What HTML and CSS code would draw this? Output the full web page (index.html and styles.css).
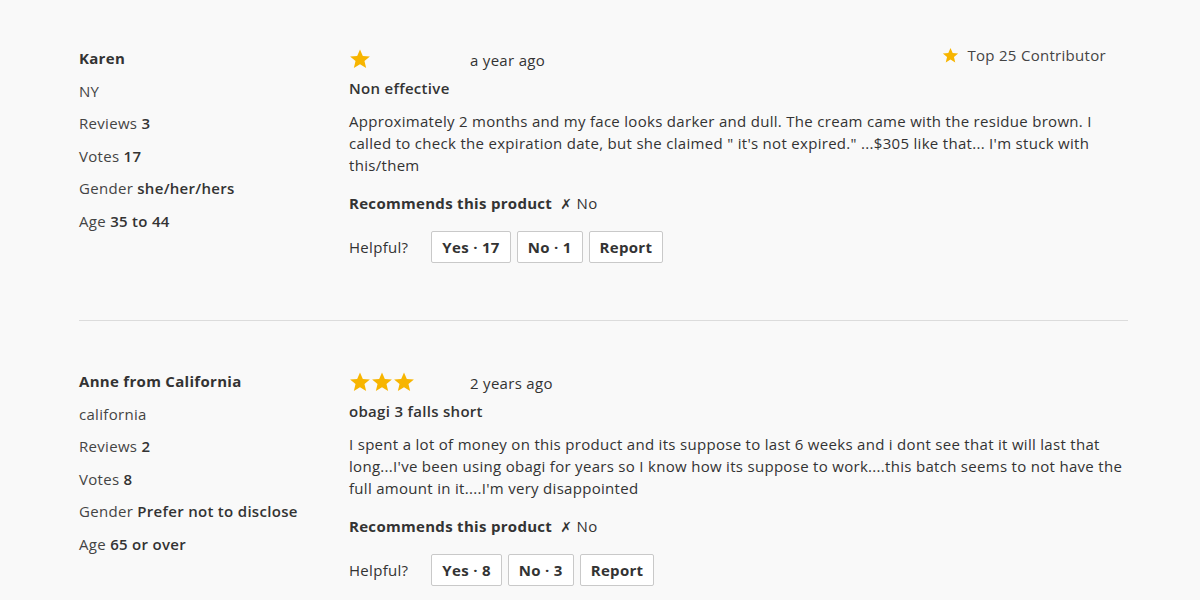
FILE: index.html
```html
<!DOCTYPE html>
<html lang="en">
<head>
<meta charset="utf-8">
<title>Reviews</title>
<link rel="stylesheet" href="styles.css">
</head>
<body>
<div class="list">
  <section class="review">
    <div class="author">
      <div class="name">Karen</div>
      <div class="meta">NY</div>
      <div class="meta">Reviews <b>3</b></div>
      <div class="meta">Votes <b>17</b></div>
      <div class="meta">Gender <b>she/her/hers</b></div>
      <div class="meta">Age <b>35 to 44</b></div>
    </div>
    <div class="body">
      <div class="head">
        <div class="stars">
          <svg class="star" viewBox="0 0 24 24"><path d="M12 1.5l3.1 7.1 7.7.6-5.9 5 1.8 7.6L12 17.8l-6.7 4 1.8-7.6-5.9-5 7.7-.6z"/></svg>
        </div>
        <span class="date">a year ago</span>
        <span class="badge"><svg class="star small" viewBox="0 0 24 24"><path d="M12 1.5l3.1 7.1 7.7.6-5.9 5 1.8 7.6L12 17.8l-6.7 4 1.8-7.6-5.9-5 7.7-.6z"/></svg>Top 25 Contributor</span>
      </div>
      <h3 class="title">Non effective</h3>
      <p class="text">Approximately 2 months and my face looks darker and dull. The cream came with the residue brown. I called to check the expiration date, but she claimed " it's not expired." ...$305 like that... I'm stuck with this/them</p>
      <div class="rec"><b>Recommends this product</b> <span class="x">✗</span> No</div>
      <div class="helpful">
        <span class="label">Helpful?</span>
        <button class="btn">Yes · 17</button>
        <button class="btn">No · 1</button>
        <button class="btn">Report</button>
      </div>
    </div>
  </section>
  <section class="review">
    <div class="author">
      <div class="name">Anne from California</div>
      <div class="meta">california</div>
      <div class="meta">Reviews <b>2</b></div>
      <div class="meta">Votes <b>8</b></div>
      <div class="meta">Gender <b>Prefer not to disclose</b></div>
      <div class="meta">Age <b>65 or over</b></div>
    </div>
    <div class="body">
      <div class="head">
        <div class="stars">
          <svg class="star" viewBox="0 0 24 24"><path d="M12 1.5l3.1 7.1 7.7.6-5.9 5 1.8 7.6L12 17.8l-6.7 4 1.8-7.6-5.9-5 7.7-.6z"/></svg>
          <svg class="star" viewBox="0 0 24 24"><path d="M12 1.5l3.1 7.1 7.7.6-5.9 5 1.8 7.6L12 17.8l-6.7 4 1.8-7.6-5.9-5 7.7-.6z"/></svg>
          <svg class="star" viewBox="0 0 24 24"><path d="M12 1.5l3.1 7.1 7.7.6-5.9 5 1.8 7.6L12 17.8l-6.7 4 1.8-7.6-5.9-5 7.7-.6z"/></svg>
        </div>
        <span class="date">2 years ago</span>
      </div>
      <h3 class="title">obagi 3 falls short</h3>
      <p class="text">I spent a lot of money on this product and its suppose to last 6 weeks and i dont see that it will last that long...I've been using obagi for years so I know how its suppose to work....this batch seems to not have the full amount in it....I'm very disappointed</p>
      <div class="rec"><b>Recommends this product</b> <span class="x">✗</span> No</div>
      <div class="helpful">
        <span class="label">Helpful?</span>
        <button class="btn">Yes · 8</button>
        <button class="btn">No · 3</button>
        <button class="btn">Report</button>
      </div>
    </div>
  </section>
</div>
</body>
</html>
```

FILE: styles.css
```css
* { box-sizing: border-box; }
html, body { margin: 0; padding: 0; }
body {
  background: #f9f9f9;
  color: #333;
  font-family: "Open Sans", "Liberation Sans", sans-serif;
  font-size: 15px;
  letter-spacing: 0.3px;
  line-height: 22px;
}
.list {
  margin-left: 79px;
  width: 1049px;
}
.review {
  display: grid;
  grid-template-columns: 270px 1fr;
  padding: 47px 0 57px;
  border-bottom: 1px solid #dcdcdc;
}
.review + .review {
  padding-top: 49px;
}
.author {
  display: flex;
  flex-direction: column;
  gap: 10.5px;
}
.name { font-weight: 700; color: #333; }
.meta { color: #444; }
.meta b { font-weight: 600; color: #333; }
.head {
  display: flex;
  align-items: center;
  height: 24px;
}
.stars {
  display: flex;
  width: 121px;
}
.star {
  width: 22px;
  height: 22px;
  fill: #f7b500;
}
.star.small {
  width: 17px;
  height: 17px;
  margin-right: 8px;
}
.date { margin-top: 2px; color: #333; }
.badge {
  margin-left: auto;
  margin-right: 22px;
  display: flex;
  align-items: center;
  margin-top: -8px;
  color: #444;
}
.title {
  margin: 6px 0 0;
  font-size: 15px;
  font-weight: 600;
  line-height: 22px;
}
.text {
  margin: 11px 0 0;
  max-width: 780px;
}
.rec {
  margin-top: 16px;
}
.rec b { font-weight: 700; }
.x {
  font-family: "DejaVu Sans", sans-serif;
  margin-left: 4px;
  font-size: 14px;
}
.helpful {
  margin-top: 16px;
  display: flex;
  align-items: center;
  gap: 6px;
}
.label { margin-right: 17px; }
.btn {
  height: 32px;
  padding: 0 10px;
  border: 1px solid #c9c9c9;
  border-radius: 2px;
  background: #fff;
  color: #333;
  font-family: inherit;
  font-size: 15px;
  letter-spacing: 0.3px;
  font-weight: 700;
}
```
